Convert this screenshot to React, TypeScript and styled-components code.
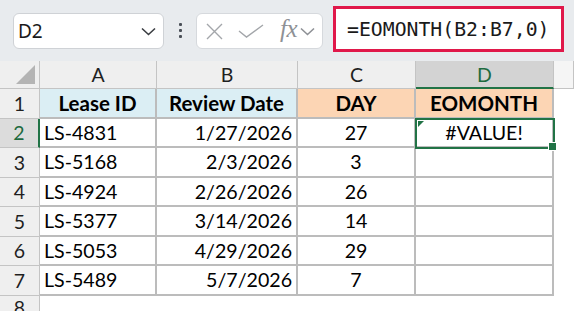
import React from "react";
import styled, { createGlobalStyle, css } from "styled-components";

const Global = createGlobalStyle`
  html, body { margin: 0; padding: 0; background: #ffffff; }
  body { font-family: "Lato", "Noto Sans", sans-serif; }
`;

const Page = styled.div`
  width: 574px;
  height: 311px;
  overflow: hidden;
  background: #ffffff;
  display: flex;
  flex-direction: column;
`;

const Toolbar = styled.div`
  height: 61px;
  flex: none;
  box-sizing: border-box;
  background: #e8ebee;
  display: flex;
  align-items: flex-start;
  padding: 6px 0 0 13px;
`;

const NameBox = styled.div`
  margin-top: 7px;
  width: 151px;
  height: 36px;
  box-sizing: border-box;
  background: #ffffff;
  border: 1px solid #cfd2d6;
  border-radius: 6px;
  display: flex;
  align-items: center;
  justify-content: space-between;
  padding: 0 7px 0 4px;
  font-family: "Noto Sans", "Open Sans", sans-serif;
  font-size: 19px;
  color: #1a1a1a;
`;

const Dots = styled.div`
  margin: 17px 14px 0 15px;
  display: flex;
  flex-direction: column;
  gap: 3px;
  & > span {
    width: 3px;
    height: 3px;
    border-radius: 1px;
    background: #4a4f57;
  }
`;

const FxBox = styled.div`
  margin-top: 7px;
  width: 127px;
  height: 36px;
  box-sizing: border-box;
  background: #ffffff;
  border: 1px solid #d6d9dd;
  border-radius: 6px;
  display: flex;
  align-items: center;
  padding-left: 9px;
  color: #a3a6aa;
`;

const FxText = styled.span`
  font-family: "Liberation Serif", "DejaVu Serif", serif;
  font-style: italic;
  font-size: 25px;
  color: #8e9196;
  margin: -4px 3px 0 16px;
  letter-spacing: -0.5px;
`;

const FormulaBox = styled.div`
  margin-left: 10px;
  width: 231px;
  height: 46px;
  box-sizing: border-box;
  border: 3px solid #e0184a;
  background: #ffffff;
  display: flex;
  align-items: center;
  padding-left: 11px;
  font-family: "DejaVu Sans Mono", "Liberation Mono", monospace;
  font-size: 19.8px;
  color: #1a1a1a;
  white-space: nowrap;
`;

const Sheet = styled.div`
  display: grid;
  grid-template-columns: 40px 117px 141px 118px 138px 20px;
  grid-template-rows: 28px repeat(7, 29.5px) 1fr;
  flex: 1;
  font-family: "Lato", "Noto Sans", sans-serif;
  font-size: 19.6px;
  color: #000;
`;

const Corner = styled.div`
  background: #efefef;
  border-right: 1px solid #c4c4c4;
  border-bottom: 1px solid #c4c4c4;
  position: relative;
  &::after {
    content: "";
    position: absolute;
    right: 4px;
    bottom: 4px;
    width: 0;
    height: 0;
    border-left: 19px solid transparent;
    border-bottom: 19px solid #b4b4b4;
  }
`;

const ColHead = styled.div<{ $sel?: boolean; $blank?: boolean }>`
  background: ${(p) => (p.$sel ? "#d3d3d3" : p.$blank ? "#f5f5f5" : "#efefef")};
  color: ${(p) => (p.$sel ? "#1e6b40" : "#1f1f1f")};
  border-right: 1px solid #c4c4c4;
  border-bottom: ${(p) => (p.$sel ? "2px solid #217346" : "1px solid #c4c4c4")};
  box-sizing: border-box;
  display: flex;
  align-items: center;
  justify-content: center;
  font-size: 19.5px;
`;

const RowHead = styled.div<{ $sel?: boolean; $last?: boolean }>`
  background: ${(p) => (p.$sel ? "#dcdcdc" : "#efefef")};
  color: ${(p) => (p.$sel ? "#1e6b40" : "#1f1f1f")};
  border-right: ${(p) => (p.$sel ? "2px solid #217346" : "1px solid #c4c4c4")};
  border-bottom: ${(p) => (p.$last ? "none" : "1px solid #c4c4c4")};
  box-sizing: border-box;
  display: flex;
  align-items: center;
  justify-content: center;
  font-size: 19.5px;
`;

type Align = "left" | "right" | "center";

const Cell = styled.div<{ $align: Align; $bg?: string; $bold?: boolean; $sel?: boolean }>`
  box-sizing: border-box;
  border-right: 2px solid #bcbcbc;
  border-bottom: 2px solid #bcbcbc;
  background: ${(p) => p.$bg || "#ffffff"};
  display: flex;
  align-items: center;
  justify-content: ${(p) =>
    p.$align === "left" ? "flex-start" : p.$align === "right" ? "flex-end" : "center"};
  padding: 0 4px;
  font-weight: ${(p) => (p.$bold ? 700 : 400)};
  font-size: ${(p) => (p.$bold ? "20.5px" : "inherit")};
  white-space: nowrap;
  position: relative;
  ${(p) =>
    p.$sel &&
    css`
      outline: 2px solid #217346;
      outline-offset: -1px;
      z-index: 2;
    `}
`;

const ErrorMark = styled.span`
  position: absolute;
  left: 2px;
  top: 2px;
  width: 0;
  height: 0;
  border-top: 6px solid #217346;
  border-right: 6px solid transparent;
`;

const Handle = styled.span`
  position: absolute;
  right: -5px;
  bottom: -5px;
  width: 7px;
  height: 7px;
  background: #217346;
  border: 1px solid #ffffff;
`;

const Empty = styled.div``;

const Chevron = ({ color = "#3a3d42" }: { color?: string }) => (
  <svg width="15" height="9" viewBox="0 0 15 9">
    <path d="M1 1.5 L7.5 7.5 L14 1.5" fill="none" stroke={color} strokeWidth="1.6" />
  </svg>
);

const BLUE = "#dbeef4";
const PEACH = "#fcd5b4";

const rows = [
  ["LS-4831", "1/27/2026", "27"],
  ["LS-5168", "2/3/2026", "3"],
  ["LS-4924", "2/26/2026", "26"],
  ["LS-5377", "3/14/2026", "14"],
  ["LS-5053", "4/29/2026", "29"],
  ["LS-5489", "5/7/2026", "7"],
];

export default function App() {
  return (
    <Page>
      <Global />
      <Toolbar>
        <NameBox>
          <span>D2</span>
          <Chevron />
        </NameBox>
        <Dots>
          <span />
          <span />
          <span />
        </Dots>
        <FxBox>
          <svg width="17" height="17" viewBox="0 0 17 17">
            <path d="M1 1 L16 16 M16 1 L1 16" stroke="#a3a6aa" strokeWidth="1.4" fill="none" />
          </svg>
          <svg width="26" height="14" viewBox="0 0 26 14" style={{ marginLeft: 15 }}>
            <path d="M1 7 L8.5 13 L25 1" stroke="#a3a6aa" strokeWidth="1.4" fill="none" />
          </svg>
          <FxText>fx</FxText>
          <Chevron color="#8e9196" />
        </FxBox>
        <FormulaBox>=EOMONTH(B2:B7,0)</FormulaBox>
      </Toolbar>
      <Sheet>
        <Corner />
        <ColHead>A</ColHead>
        <ColHead>B</ColHead>
        <ColHead>C</ColHead>
        <ColHead $sel>D</ColHead>
        <ColHead $blank />

        <RowHead>1</RowHead>
        <Cell $align="center" $bg={BLUE} $bold>Lease ID</Cell>
        <Cell $align="center" $bg={BLUE} $bold>Review Date</Cell>
        <Cell $align="center" $bg={PEACH} $bold>DAY</Cell>
        <Cell $align="center" $bg={PEACH} $bold>EOMONTH</Cell>
        <Empty />

        {rows.map((r, i) => (
          <React.Fragment key={r[0]}>
            <RowHead $sel={i === 0}>{i + 2}</RowHead>
            <Cell $align="left">{r[0]}</Cell>
            <Cell $align="right">{r[1]}</Cell>
            <Cell $align="center">{r[2]}</Cell>
            {i === 0 ? (
              <Cell $align="center" $sel>
                <ErrorMark />
                #VALUE!
                <Handle />
              </Cell>
            ) : (
              <Cell $align="center" />
            )}
            <Empty />
          </React.Fragment>
        ))}
        <RowHead $last>8</RowHead>
        <Empty />
        <Empty />
        <Empty />
        <Empty />
        <Empty />
      </Sheet>
    </Page>
  );
}
